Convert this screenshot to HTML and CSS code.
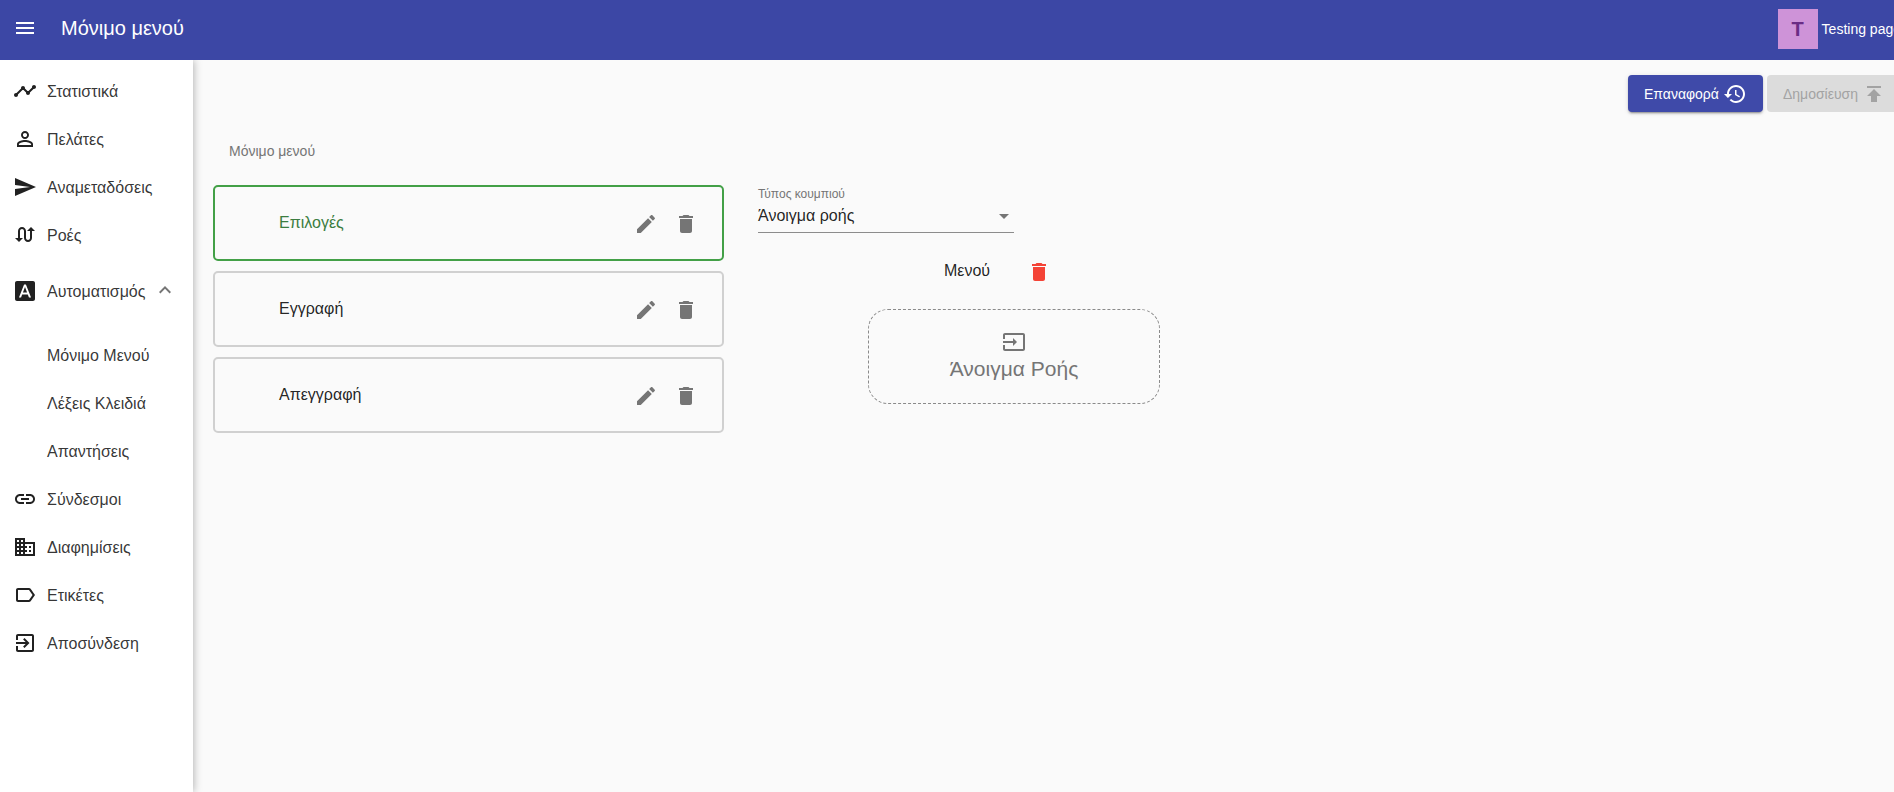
FILE: index.html
```html
<!DOCTYPE html>
<html lang="el">
<head>
<meta charset="utf-8">
<title>Μόνιμο μενού</title>
<link rel="stylesheet" href="styles.css">
</head>
<body>
<header class="appbar">
  <svg class="icon menu-icon" viewBox="0 0 24 24"><path d="M3 18h18v-2H3v2zm0-5h18v-2H3v2zm0-7v2h18V6H3z"/></svg>
  <h1 class="title">Μόνιμο μενού</h1>
  <div class="account">
    <div class="avatar">T</div>
    <span class="account-name">Testing page</span>
  </div>
</header>
<div class="body-row">
  <nav class="drawer">
    <a class="nav-item"><svg class="icon" viewBox="0 0 24 24"><path d="M23 8c0 1.1-.9 2-2 2-.18 0-.35-.02-.51-.07l-3.56 3.55c.05.16.07.34.07.52 0 1.1-.9 2-2 2s-2-.9-2-2c0-.18.02-.36.07-.52l-2.55-2.55c-.16.05-.34.07-.52.07s-.36-.02-.52-.07l-4.55 4.56c.05.16.07.33.07.51 0 1.1-.9 2-2 2s-2-.9-2-2 .9-2 2-2c.18 0 .35.02.51.07l4.56-4.55C8.02 9.36 8 9.18 8 9c0-1.1.9-2 2-2s2 .9 2 2c0 .18-.02.36-.07.52l2.55 2.55c.16-.05.34-.07.52-.07s.36.02.52.07l3.55-3.56C19.02 8.35 19 8.18 19 8c0-1.1.9-2 2-2s2 .9 2 2z"/></svg><span>Στατιστικά</span></a>
    <a class="nav-item"><svg class="icon" viewBox="0 0 24 24"><path d="M12 5.9c1.16 0 2.1.94 2.1 2.1s-.94 2.1-2.1 2.1S9.9 9.16 9.9 8s.94-2.1 2.1-2.1m0 9c2.97 0 6.1 1.46 6.1 2.1v1.1H5.9V17c0-.64 3.13-2.1 6.1-2.1M12 4C9.79 4 8 5.79 8 8s1.79 4 4 4 4-1.79 4-4-1.79-4-4-4zm0 9c-2.67 0-8 1.34-8 4v3h16v-3c0-2.66-5.33-4-8-4z"/></svg><span>Πελάτες</span></a>
    <a class="nav-item"><svg class="icon" viewBox="0 0 24 24"><path d="M2.01 21L23 12 2.01 3 2 10l15 2-15 2z"/></svg><span>Αναμεταδόσεις</span></a>
    <a class="nav-item"><svg class="icon" viewBox="0 0 24 24"><path d="M18 4l-4 4h3v7c0 1.1-.9 2-2 2s-2-.9-2-2V8c0-2.21-1.79-4-4-4S5 5.79 5 8v7H2l4 4 4-4H7V8c0-1.1.9-2 2-2s2 .9 2 2v7c0 2.21 1.79 4 4 4s4-1.79 4-4V8h3l-4-4z"/></svg><span>Ροές</span></a>
    <a class="nav-item nav-parent"><svg class="icon" viewBox="0 0 24 24"><path d="M9.93 13.5h4.14L12 7.98zM20 2H4c-1.1 0-2 .9-2 2v16c0 1.1.9 2 2 2h16c1.1 0 2-.9 2-2V4c0-1.1-.9-2-2-2zm-4.05 16.5l-1.14-3H9.17l-1.12 3H5.96l5.11-13h1.86l5.11 13h-2.09z"/></svg><span>Αυτοματισμός</span><svg class="icon chevron" viewBox="0 0 24 24"><path d="M12 8l-6 6 1.41 1.41L12 10.83l4.59 4.58L18 14z"/></svg></a>
    <a class="nav-item nav-sub"><span>Μόνιμο Μενού</span></a>
    <a class="nav-item nav-sub"><span>Λέξεις Κλειδιά</span></a>
    <a class="nav-item nav-sub"><span>Απαντήσεις</span></a>
    <a class="nav-item"><svg class="icon" viewBox="0 0 24 24"><path d="M3.9 12c0-1.71 1.39-3.1 3.1-3.1h4V7H7c-2.76 0-5 2.24-5 5s2.24 5 5 5h4v-1.9H7c-1.71 0-3.1-1.39-3.1-3.1zM8 13h8v-2H8v2zm9-6h-4v1.9h4c1.71 0 3.1 1.39 3.1 3.1s-1.39 3.1-3.1 3.1h-4V17h4c2.76 0 5-2.24 5-5s-2.24-5-5-5z"/></svg><span>Σύνδεσμοι</span></a>
    <a class="nav-item"><svg class="icon" viewBox="0 0 24 24"><path d="M12 7V3H2v18h20V7H12zM6 19H4v-2h2v2zm0-4H4v-2h2v2zm0-4H4V9h2v2zm0-4H4V5h2v2zm4 12H8v-2h2v2zm0-4H8v-2h2v2zm0-4H8V9h2v2zm0-4H8V5h2v2zm10 12h-8v-2h2v-2h-2v-2h2v-2h-2V9h8v10zm-2-8h-2v2h2v-2zm0 4h-2v2h2v-2z"/></svg><span>Διαφημίσεις</span></a>
    <a class="nav-item"><svg class="icon" viewBox="0 0 24 24"><path d="M17.63 5.84C17.27 5.33 16.67 5 16 5L5 5.01C3.9 5.01 3 5.9 3 7v10c0 1.1.9 1.99 2 1.99L16 19c.67 0 1.27-.33 1.63-.84L22 12l-4.37-6.16zM16 17H5V7h11l3.55 5L16 17z"/></svg><span>Ετικέτες</span></a>
    <a class="nav-item"><svg class="icon" viewBox="0 0 24 24"><path d="M10.09 15.59L11.5 17l5-5-5-5-1.41 1.41L12.67 11H3v2h9.67l-2.58 2.58zM19 3H5c-1.11 0-2 .9-2 2v4h2V5h14v14H5v-4H3v4c0 1.1.89 2 2 2h14c1.1 0 2-.9 2-2V5c0-1.1-.9-2-2-2z"/></svg><span>Αποσύνδεση</span></a>
  </nav>
  <main class="content">
    <div class="actions">
      <button class="btn btn-primary">Επαναφορά<svg class="icon" viewBox="0 0 24 24"><path d="M13 3c-4.97 0-9 4.03-9 9H1l3.89 3.89.07.14L9 12H6c0-3.87 3.13-7 7-7s7 3.13 7 7-3.13 7-7 7c-1.93 0-3.68-.79-4.94-2.06l-1.42 1.42C8.27 19.99 10.51 21 13 21c4.97 0 9-4.03 9-9s-4.03-9-9-9zm-1 5v5l4.28 2.54.72-1.21-3.5-2.08V8H12z"/></svg></button>
      <button class="btn btn-disabled">Δημοσίευση<svg class="icon" viewBox="0 0 24 24"><path d="M5 4v2h14V4H5zm0 10h4v6h6v-6h4l-7-7-7 7z"/></svg></button>
    </div>
    <p class="crumb">Μόνιμο μενού</p>
    <div class="editor">
      <div class="cards">
        <div class="card card-active"><span class="card-name">Επιλογές</span>
          <svg class="icon card-edit" viewBox="0 0 24 24"><path d="M3 17.25V21h3.75L17.81 9.94l-3.75-3.75L3 17.25zM20.71 7.04c.39-.39.39-1.02 0-1.41l-2.34-2.34c-.39-.39-1.02-.39-1.41 0l-1.83 1.83 3.75 3.75 1.83-1.83z"/></svg>
          <svg class="icon card-del" viewBox="0 0 24 24"><path d="M6 19c0 1.1.9 2 2 2h8c1.1 0 2-.9 2-2V7H6v12zM19 4h-3.5l-1-1h-5l-1 1H5v2h14V4z"/></svg></div>
        <div class="card"><span class="card-name">Εγγραφή</span>
          <svg class="icon card-edit" viewBox="0 0 24 24"><path d="M3 17.25V21h3.75L17.81 9.94l-3.75-3.75L3 17.25zM20.71 7.04c.39-.39.39-1.02 0-1.41l-2.34-2.34c-.39-.39-1.02-.39-1.41 0l-1.83 1.83 3.75 3.75 1.83-1.83z"/></svg>
          <svg class="icon card-del" viewBox="0 0 24 24"><path d="M6 19c0 1.1.9 2 2 2h8c1.1 0 2-.9 2-2V7H6v12zM19 4h-3.5l-1-1h-5l-1 1H5v2h14V4z"/></svg></div>
        <div class="card"><span class="card-name">Απεγγραφή</span>
          <svg class="icon card-edit" viewBox="0 0 24 24"><path d="M3 17.25V21h3.75L17.81 9.94l-3.75-3.75L3 17.25zM20.71 7.04c.39-.39.39-1.02 0-1.41l-2.34-2.34c-.39-.39-1.02-.39-1.41 0l-1.83 1.83 3.75 3.75 1.83-1.83z"/></svg>
          <svg class="icon card-del" viewBox="0 0 24 24"><path d="M6 19c0 1.1.9 2 2 2h8c1.1 0 2-.9 2-2V7H6v12zM19 4h-3.5l-1-1h-5l-1 1H5v2h14V4z"/></svg></div>
      </div>
      <section class="detail">
        <div class="select">
          <label class="select-label">Τύπος κουμπιού</label>
          <div class="select-value"><span>Άνοιγμα ροής</span><svg class="icon select-arrow" viewBox="0 0 24 24"><path d="M7 10l5 5 5-5z"/></svg></div>
        </div>
        <div class="menu-row"><span>Μενού</span><svg class="icon menu-del" viewBox="0 0 24 24"><path d="M6 19c0 1.1.9 2 2 2h8c1.1 0 2-.9 2-2V7H6v12zM19 4h-3.5l-1-1h-5l-1 1H5v2h14V4z"/></svg></div>
        <div class="flow-box">
          <svg class="icon flow-icon" viewBox="0 0 24 24"><path d="M21 3.01H3c-1.1 0-2 .9-2 2V9h2V4.99h18v14.03H3V15H1v4.01c0 1.1.9 1.98 2 1.98h18c1.1 0 2-.88 2-1.98v-14c0-1.11-.9-2-2-2zM11 16l4-4-4-4v3H1v2h10v3z"/></svg>
          <span class="flow-text">Άνοιγμα Ροής</span>
        </div>
      </section>
    </div>
  </main>
</div>
</body>
</html>
```
FILE: styles.css
```css
* { box-sizing: border-box; }
html, body { margin: 0; height: 100%; overflow: hidden; }
body {
  font-family: "Liberation Sans", Arial, sans-serif;
  background: #fafafa;
  color: rgba(0, 0, 0, 0.87);
  display: flex;
  flex-direction: column;
}
.icon { width: 24px; height: 24px; fill: currentColor; flex: none; display: block; }

.appbar {
  height: 60px;
  flex: none;
  background: #3c47a5;
  color: #fff;
  display: flex;
  align-items: center;
  padding-left: 13px;
  position: relative;
  z-index: 2;
}
.menu-icon { margin-right: 24px; margin-top: -4px; }
.title { margin: 0; font-size: 20px; font-weight: 400; line-height: 28px; margin-top: -4px; flex: 1; }
.account { display: flex; align-items: center; margin-right: -7px; margin-top: -2px; }
.avatar {
  width: 40px; height: 40px;
  background: #ce93d8;
  color: #6a2c85;
  font-size: 20px;
  font-weight: 700;
  display: flex; align-items: center; justify-content: center;
  margin-right: 4px;
}
.account-name { font-size: 14px; white-space: nowrap; margin-top: -1px; }

.body-row { flex: 1; display: flex; min-height: 0; }
.drawer {
  width: 193px;
  flex: none;
  background: #fff;
  box-shadow: 1px 0 8px rgba(0, 0, 0, 0.28);
  padding-top: 7px;
  position: relative;
  z-index: 1;
}
.nav-item {
  display: flex;
  align-items: center;
  height: 48px;
  padding-left: 13px;
  font-size: 16px;
  color: rgba(0, 0, 0, 0.8);
}
.nav-item span { margin-top: 2px; }
.nav-item .icon { color: #212121; margin-right: 10px; }
.nav-parent { margin: 8px 0 16px; }
.nav-item .chevron { color: #757575; margin: -3px 0 0 8px; }
.nav-sub { padding-left: 47px; }

.content { flex: 1; min-width: 0; padding: 15px 0 0 20px; }
.actions { display: flex; justify-content: flex-end; gap: 4px; margin-right: -8px; }
.btn {
  height: 37px;
  border: 0;
  border-radius: 4px;
  font: 400 14px "Liberation Sans", Arial, sans-serif;
  display: flex;
  align-items: center;
  gap: 4px;
  padding: 0 16px;
}
.btn-primary {
  background: #3f4aa9;
  color: #fff;
  box-shadow: 0 3px 1px -2px rgba(0, 0, 0, 0.2), 0 2px 2px rgba(0, 0, 0, 0.14), 0 1px 5px rgba(0, 0, 0, 0.12);
}
.btn-disabled { background: #dcdcdc; color: #a3a3a3; }
.crumb { margin: 30px 0 0 16px; font-size: 14px; line-height: 18px; color: #757575; }

.editor { display: flex; gap: 34px; margin-top: 25px; }
.cards { width: 511px; flex: none; display: flex; flex-direction: column; gap: 10px; }
.card {
  height: 76px;
  border: 2px solid #d0d0d0;
  border-radius: 5px;
  display: flex;
  align-items: center;
  padding-left: 64px;
  font-size: 16px;
}
.card-name { flex: 1; }
.card-active { border-color: #43a047; }
.card-active .card-name { color: #3b7d40; }
.card-edit, .card-del { color: #757575; margin-top: 2px; }
.card-del { margin-left: 16px; margin-right: 24px; }

.detail { width: 401px; flex: none; }
.select { width: 256px; border-bottom: 1px solid #8c8c8c; height: 48px; padding-top: 2px; }
.select-label { display: block; font-size: 12px; line-height: 14px; color: #757575; }
.select-value { display: flex; align-items: center; justify-content: space-between; font-size: 16px; height: 24px; margin-top: 3px; }
.select-arrow { color: #757575; margin-right: -2px; }
.menu-row { display: flex; align-items: center; height: 24px; margin: 27px 0 0 186px; font-size: 16px; }
.menu-row span { margin-top: -2px; }
.menu-del { color: #f44336; margin-left: 37px; }
.flow-box {
  width: 292px;
  height: 95px;
  margin: 25px 0 0 110px;
  border: 1px dashed #8a8a8a;
  border-radius: 20px;
  display: flex;
  flex-direction: column;
  align-items: center;
  padding-top: 20px;
  color: #757575;
}
.flow-text { font-size: 21px; line-height: 30px; }
```
